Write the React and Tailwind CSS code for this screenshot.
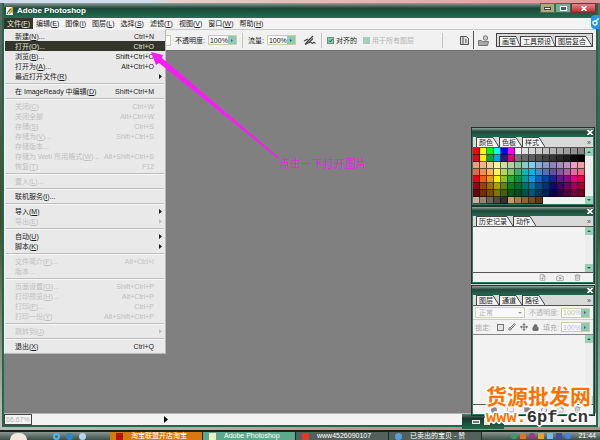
import React from 'react';
import { Brush, Folder, Lock, Move, StickyNote, Trash2, Camera, FilePlus } from 'lucide-react';

const SEP = 'sep';

const fileMenu = [
  { label: '新建', accel: 'N', dots: true, keys: 'Ctrl+N' },
  { label: '打开', accel: 'O', dots: true, keys: 'Ctrl+O', active: true },
  { label: '浏览', accel: 'B', dots: true, keys: 'Shift+Ctrl+O' },
  { label: '打开为', accel: 'A', dots: true, keys: 'Alt+Ctrl+O' },
  { label: '最近打开文件', accel: 'R', sub: true },
  SEP,
  { label: '在 ImageReady 中编辑', accel: 'D', keys: 'Shift+Ctrl+M' },
  SEP,
  { label: '关闭', accel: 'C', keys: 'Ctrl+W', disabled: true },
  { label: '关闭全部', keys: 'Alt+Ctrl+W', disabled: true },
  { label: '存储', accel: 'S', keys: 'Ctrl+S', disabled: true },
  { label: '存储为', accel: 'V', dots: true, keys: 'Shift+Ctrl+S', disabled: true },
  { label: '存储版本', dots: true, disabled: true },
  { label: '存储为 Web 所用格式', accel: 'W', dots: true, keys: 'Alt+Shift+Ctrl+S', disabled: true },
  { label: '恢复', accel: 'T', keys: 'F12', disabled: true },
  SEP,
  { label: '置入', accel: 'L', dots: true, disabled: true },
  SEP,
  { label: '联机服务', accel: 'I', dots: true },
  SEP,
  { label: '导入', accel: 'M', sub: true },
  { label: '导出', accel: 'E', sub: true, disabled: true },
  SEP,
  { label: '自动', accel: 'U', sub: true },
  { label: '脚本', accel: 'K', sub: true },
  SEP,
  { label: '文件简介', accel: 'F', dots: true, keys: 'Alt+Ctrl+I', disabled: true },
  { label: '版本', dots: true, disabled: true },
  SEP,
  { label: '页面设置', accel: 'G', dots: true, keys: 'Shift+Ctrl+P', disabled: true },
  { label: '打印预览', accel: 'H', dots: true, keys: 'Alt+Ctrl+P', disabled: true },
  { label: '打印', accel: 'P', dots: true, keys: 'Ctrl+P', disabled: true },
  { label: '打印一份', accel: 'Y', keys: 'Alt+Shift+Ctrl+P', disabled: true },
  SEP,
  { label: '跳转到', accel: 'J', sub: true, disabled: true },
  SEP,
  { label: '退出', accel: 'X', keys: 'Ctrl+Q' },
];

const menus = [
  ['文件', 'F'], ['编辑', 'E'], ['图像', 'I'], ['图层', 'L'], ['选择', 'S'],
  ['滤镜', 'T'], ['视图', 'V'], ['窗口', 'W'], ['帮助', 'H'],
];

const swatches = [
  'f00 ff0 0f0 0ff 00f f0f fff e1e1e1 d7d7d7 cccccc c0c0c0 b4b4b4 a8a8a8 9c9c9c 909090 848484',
  'e2001f fff200 00a63f 00a5e8 35137e e3007b 747474 686868 5c5c5c 505050 434343 363636 292929 1c1c1c 0a0a0a 000',
  'f29b76 f6b37f facd89 fff799 cce198 acd598 89c997 84ccc9 7ecef4 88abda 8c97cb 8f82bc aa89bd c490bf f19ec2 f29c9f',
  'eb6841 f19149 f8b551 fff45c b3d465 80c269 32b16c 13b5b1 00b7ee 448aca 556fb5 5f52a0 8957a1 ae5da1 ea68a2 eb6877',
  'e60012 eb6100 f39800 fff100 8fc31f 22ac38 009944 009e96 00a0e9 0068b7 00479d 1d2088 601986 920783 e4007f e5004f',
  '9a0016 a04000 a56b00 aba000 5f8519 097c25 006e31 00716b 0075a9 004e84 003472 100964 440062 6a005f a4005b a40035',
  '6d0010 723000 7a4d00 7d7500 456012 005a18 004e22 00514c 00547c 003860 002452 080247 2e0046 4b0043 750040 740024',
  'c7b299 998675 736357 534741 362f2d c69c6d a67c52 8c6239 754c24 603913',
].map((row) => row.split(' '));

const Accel = ({ k }) => (k ? <>(<u className="underline-offset-1">{k}</u>)</> : null);

const MenuRow = ({ item }) => (
  <button
    type="button"
    role="menuitem"
    disabled={item.disabled}
    className={`flex h-[10px] w-full items-center pl-[10px] pr-[3px] text-left ${
      item.active ? 'bg-[#33352a] text-[#e4e4dc]' : item.disabled ? 'text-[#c0c0c0]' : 'text-[#1c1c1c]'
    }`}
  >
    <span className="flex-1 whitespace-nowrap">
      {item.label}
      <Accel k={item.accel} />
      {item.dots && '...'}
    </span>
    <span className="whitespace-nowrap">{item.keys}</span>
    <span className="flex w-[8px] justify-end">
      {item.sub && (
        <svg className="h-[5px] w-[3px]" viewBox="0 0 3 5" fill="currentColor">
          <path d="M0 0l3 2.5L0 5z" />
        </svg>
      )}
    </span>
  </button>
);

const FileMenu = () => (
  <div
    role="menu"
    className="absolute left-0 top-full z-20 w-[162px] border border-[#f4f4f4] border-b-[#b8b8b8] border-r-[#b8b8b8] bg-[#e9e9e9] pb-[2px] pt-px"
  >
    {fileMenu.map((item, i) =>
      item === SEP ? (
        <div key={i} className="flex h-[5px] items-center px-px">
          <div className="h-[2px] flex-1 border-b border-t border-b-[#f8f8f8] border-t-[#bdbdbd]" />
        </div>
      ) : (
        <MenuRow key={i} item={item} />
      )
    )}
  </div>
);

const Percent = ({ id, muted }) => (
  <span className="flex h-[10px] w-[29px] border border-[#c9cda9] bg-[#fafafa]">
    <input
      id={id}
      defaultValue="100%"
      className={`w-[19px] min-w-0 bg-transparent pl-px outline-none ${muted ? 'text-[#bcbcbc]' : 'text-[#222]'}`}
    />
    <button type="button" aria-label="滑块" className="flex w-2 items-center justify-center bg-[#8fc9b1]">
      <svg className="h-[3px] w-[2px]" viewBox="0 0 2 3" fill="#3c5b8c">
        <path d="M0 0l2 1.5L0 3z" />
      </svg>
    </button>
  </span>
);

const Tab = ({ children, narrow }) => (
  <button type="button" className="flex h-[10px] items-stretch whitespace-nowrap text-[#1d1d1d]">
    <span className="border-l border-t border-[#444] bg-[#f3f3f3] pl-[2px]">{children}</span>
    <svg className={narrow ? 'h-[10px] w-1' : 'h-[10px] w-[6px]'} viewBox="0 0 6 10" preserveAspectRatio="none">
      <path d="M0 0L6 10H0z" fill="#f3f3f3" />
      <path d="M0 .5L6 10" stroke="#444" fill="none" />
    </svg>
  </button>
);

const Palette = ({ tabs, children }) => (
  <section className="border border-[#20352d] bg-[#f2f2f2]">
    <header className="flex h-[9px] items-center justify-end bg-gradient-to-b from-[#8fa69c] via-[#23473a] via-40% to-[#1b6b50] pr-px">
      <button type="button" aria-label="关闭面板">
        <svg className="h-[5px] w-[6px]" viewBox="0 0 6 5" stroke="#fff" strokeWidth="1.6">
          <path d="M.5 0l5 5M5.500 0l-5 5" />
        </svg>
      </button>
    </header>
    <div className="border-x border-b border-[#2c7a60]">
      <div className="flex h-[11px] items-end border-b border-[#555] bg-[#d9d9d9] pl-[3px]">
        {tabs.map((t) => (
          <Tab key={t}>{t}</Tab>
        ))}
        <button type="button" aria-label="面板菜单" className="ml-auto pr-[2px] text-[#444]">»</button>
      </div>
      {children}
    </div>
  </section>
);

const ScrollBar = () => (
  <div className="flex w-2 shrink-0 flex-col justify-between bg-[#ededed]">
    <button type="button" aria-label="向上" className="flex h-2 items-center justify-center bg-[#9ccfba]">
      <svg className="h-[2px] w-1" viewBox="0 0 4 2" fill="#3a5a4d"><path d="M0 2l2-2 2 2z" /></svg>
    </button>
    <button type="button" aria-label="向下" className="flex h-2 items-center justify-center bg-[#9ccfba]">
      <svg className="h-[2px] w-1" viewBox="0 0 4 2" fill="#3a5a4d"><path d="M0 0l2 2 2-2z" /></svg>
    </button>
  </div>
);

const Footer = ({ children }) => (
  <div className="flex h-[10px] items-center justify-end gap-[10px] border-t border-[#555] pr-[12px] text-[#858585]">
    {children}
  </div>
);

const Palettes = () => (
  <aside className="absolute bottom-[9px] right-px z-10 flex w-[124px] flex-col">
    <Palette tabs={['颜色', '色板', '样式']}>
      <div className="flex">
        <div className="flex-1">
          {swatches.map((row, r) => (
            <div key={r} className="flex">
              {row.map((c, i) => (
                <button
                  key={i}
                  type="button"
                  aria-label={`#${c}`}
                  className="size-[7px] border-b border-r border-black/60"
                  style={{ backgroundColor: `#${c}` }}
                />
              ))}
            </div>
          ))}
        </div>
        <ScrollBar />
      </div>
    </Palette>
    <Palette tabs={['历史记录', '动作']}>
      <div className="flex h-[45px]">
        <div className="flex-1" />
        <ScrollBar />
      </div>
      <Footer>
        <FilePlus size={7} />
        <Camera size={8} />
        <Trash2 size={7} />
      </Footer>
    </Palette>
    <div className="h-px bg-[#cfd8d4]" />
    <Palette tabs={['图层', '通道', '路径']}>
      <div className="flex h-[14px] items-center border-b border-[#ccc] pl-[2px] pr-[3px] text-[#b4b4b4]">
        <select
          aria-label="混合模式"
          className="h-[11px] w-[50px] appearance-none border border-[#d0d3b4] bg-[#f8f8f8] pl-[3px] outline-none"
        >
          <option>正常</option>
        </select>
        <svg className="-ml-[7px] h-[2px] w-1" viewBox="0 0 4 2" fill="#999"><path d="M0 0l2 2 2-2z" /></svg>
        <label htmlFor="opacity2" className="ml-auto mr-[2px] whitespace-nowrap">不透明度:</label>
        <Percent id="opacity2" muted />
      </div>
      <div className="flex h-[15px] items-center border-b border-[#888] pl-[2px] pr-[3px] text-[#a8a8a8]">
        <span>锁定:</span>
        <div className="ml-[6px] flex items-center gap-1 text-[#6d6d6d]">
          <button type="button" aria-label="锁定透明像素" className="size-[7px] border border-[#777] bg-[#e2e2e2]" />
          <button type="button" aria-label="锁定图像"><Brush size={8} strokeWidth={3} /></button>
          <button type="button" aria-label="锁定位置"><Move size={8} strokeWidth={3} /></button>
          <button type="button" aria-label="锁定全部"><Lock size={7} fill="currentColor" strokeWidth={3} /></button>
        </div>
        <label htmlFor="fill" className="ml-auto mr-[2px]">填充:</label>
        <Percent id="fill" muted />
      </div>
      <div className="flex h-[69px]">
        <div className="flex-1" />
        <ScrollBar />
      </div>
      <Footer>
        <span className="size-[6px] rounded-full bg-[#8b8b8b]" />
        <Folder size={7} />
        <Folder size={7} fill="currentColor" />
        <span className="size-[6px] rounded-full border border-[#8b8b8b]" />
        <StickyNote size={7} />
        <Trash2 size={7} />
      </Footer>
    </Palette>
  </aside>
);

const OptionsBar = () => (
  <div className="flex h-[22px] items-center border-b border-t border-b-[#6e6e6e] border-t-[#c9c9c9] bg-[#f1f1f1] pr-[3px]">
    <div className="flex w-[171px] justify-end pr-1">
      <span className="h-[11px] w-10 border border-[#c9cda9] bg-[#fafafa]" />
    </div>
    <label htmlFor="opacity" className="mr-[3px]">不透明度:</label>
    <Percent id="opacity" />
    <i className="mx-[5px] h-[15px] w-px bg-[#c2c2c2]" />
    <label htmlFor="flow" className="mr-[3px]">流量:</label>
    <Percent id="flow" />
    <button type="button" aria-label="喷枪" className="ml-[7px]">
      <svg className="h-[11px] w-[13px]" viewBox="0 0 13 11" fill="none" stroke="#444">
        <path d="M10 1L5 6l-3 3.500 4-2 4-4M1 6l4-2M6 8c2-3 3 2 4 0s2 1 2.500 0" strokeWidth="1.200" />
      </svg>
    </button>
    <i className="mx-[5px] h-[15px] w-px bg-[#c2c2c2]" />
    <span className="relative flex">
      <input id="aligned" type="checkbox" defaultChecked className="size-[7px] appearance-none border border-[#5c9a82] bg-[#8fc9b1]" />
      <svg className="pointer-events-none absolute inset-0 size-[7px]" viewBox="0 0 7 7" fill="none" stroke="#163">
        <path d="M2 3.500l1.200 1.500L5.500 2" />
      </svg>
    </span>
    <label htmlFor="aligned" className="ml-[2px] mr-[6px]">对齐的</label>
    <input id="all-layers" type="checkbox" className="size-[7px] appearance-none bg-[#a3d0be]" />
    <label htmlFor="all-layers" className="ml-[2px] text-[#b3b3b3]">用于所有图层</label>
    <i className="ml-auto mr-[17px] h-[15px] w-px bg-[#c2c2c2]" />
    <button type="button" aria-label="画笔面板">
      <svg className="h-[9px] w-[9px]" viewBox="0 0 9 9" fill="#ddd" stroke="#555">
        <path d="M.5.5h6l2 2v6h-8zM3 .5v8M5 4h2M5 6h2" />
      </svg>
    </button>
    <i className="mx-[4px] h-[18px] w-px bg-[#555]" />
    <button type="button" aria-label="文件浏览器">
      <svg className="h-[11px] w-[12px]" viewBox="0 0 12 11" fill="#aaa" stroke="#777">
        <path d="M.5 5.500h3l1 1h6l-1 4h-9z" />
        <circle cx="7.500" cy="3" r="2.200" fill="#ccc" />
      </svg>
    </button>
    <div className="ml-[6px] flex h-[14px] w-[97px] items-end border border-[#444] bg-[#d9d9d9] pl-[2px]">
      <Tab narrow>画笔</Tab>
      <Tab narrow>工具预设</Tab>
      <Tab>图层复合</Tab>
    </div>
  </div>
);

const TitleBar = () => (
  <header className="flex h-[15px] items-center bg-gradient-to-b from-[#8ea39b] via-[#1c4537] via-35% to-[#1d7254] pl-px">
    <svg className="h-[9px] w-[10px]" viewBox="0 0 10 9">
      <path d="M1 1h6l1 8H1z" fill="#f4f4ea" />
      <path d="M3 5c2-4 4-3 5-4 1 3-1 6-4 7z" fill="#d9a52f" />
      <path d="M2 8c1-3 3-4 4-5" stroke="#2d6da8" fill="none" />
    </svg>
    <h1 className="ml-[2px] text-[8px] font-bold text-white">Adobe Photoshop</h1>
    <div className="ml-auto flex h-[10px] self-start">
      <button type="button" aria-label="最小化" className="flex w-[15px] items-center justify-center border border-[#596a4e] bg-[#a8a878]">
        <span className="h-[3px] w-[7px] border border-[#444] bg-white" />
      </button>
      <button type="button" aria-label="最大化" className="flex w-4 items-center justify-center border border-[#3b6b58] bg-[#6cb396]">
        <span className="h-[5px] w-[7px] border border-white bg-[#35705a]" />
      </button>
      <button type="button" aria-label="关闭" className="flex w-[25px] items-center justify-center border border-[#7c2c32] bg-gradient-to-b from-[#dd8585] to-[#c4202e]">
        <svg className="h-[5px] w-[6px]" viewBox="0 0 6 5" stroke="#fff" strokeWidth="1.600"><path d="M.5 0l5 5M5.500 0l-5 5" /></svg>
      </button>
    </div>
  </header>
);

const TaskButton = ({ icon, className, children }) => (
  <button type="button" className={`flex w-[93px] items-center gap-2 whitespace-nowrap border-r border-[#1b2a25] pl-[6px] text-white ${className}`}>
    <span className={`size-[7px] shrink-0 ${icon}`} />
    {children}
  </button>
);

const TaskBar = () => (
  <footer className="flex shrink-0 border-t-2 border-[#16211d] bg-gradient-to-b from-[#8a9792] to-[#3d5047] text-[7px] leading-[8px]">
    <div className="flex w-[110px] items-center gap-[6px] pl-[10px]">
      <span className="mr-5 h-[7px] w-[17px] rounded-t-full bg-[#f0e8e0]" />
      <span className="size-[7px] rounded-full border-2 border-[#4cb8ee]" />
      <span className="size-[7px] rounded-full bg-[#2d86c5]" />
      <span className="size-[7px] rounded-sm bg-[#b4d5ee]" />
    </div>
    <TaskButton icon="bg-[#b3160c]" className="bg-[#d57a0c]">淘宝联盟开店淘宝</TaskButton>
    <TaskButton icon="bg-[#f1f1c8]" className="bg-[#5caa8e]">Adobe Photoshop</TaskButton>
    <TaskButton icon="bg-[#e03a24]" className="bg-[#52615b]">www4526090107</TaskButton>
    <TaskButton icon="rounded-full bg-[#5d9be0]" className="bg-[#52615b]">已卖出的宝贝 - 赞</TaskButton>
    <div className="ml-auto flex items-center gap-[3px] pr-1 text-white">
      <span className="size-[6px] rounded-full bg-[#3a9c6d]" />
      <span className="size-[6px] bg-[#e0722a]" />
      <span className="size-[6px] rounded-full bg-[#a3308a]" />
      <span className="size-[6px] bg-[#e0a52a]" />
      <span className="size-[6px] bg-[#74b8ea]" />
      <span className="size-[6px] bg-[#3d4f9c]" />
      <span className="size-[6px] rounded-full bg-[#3f83ee]" />
      <span className="ml-1">21:44</span>
    </div>
  </footer>
);

export default function App() {
  return (
    <div className="relative flex h-screen flex-col overflow-hidden bg-gradient-to-b from-[#5d6f66] via-[#37502b] to-[#c8ccc4] font-['Liberation_Sans','Noto_Sans_CJK_SC',sans-serif] text-[7px] leading-[9px] text-[#222]">
      <div className="h-[3px] shrink-0 bg-gradient-to-r from-[#cfdcec] from-25% via-[#eccbc8] via-30% to-[#d99a98]" />

      <div className="relative mx-[2px] flex min-h-0 flex-1 flex-col border-x-2 border-b-2 border-[#22664f]">
        <TitleBar />
        <nav className="relative flex h-[11px] shrink-0 bg-[#f3f3f3]">
          {menus.map(([name, key], i) => (
            <button
              key={name}
              type="button"
              className={`whitespace-nowrap px-[3px] ${i === 0 ? 'bg-[#33352a] text-[#e4e4dc]' : ''}`}
            >
              {name}
              <Accel k={key} />
            </button>
          ))}
          <FileMenu />
        </nav>
        <OptionsBar />

        <main className="flex-1 bg-[#808080]" />

        <div className="flex h-[12px] shrink-0 items-center border-t border-[#b5b5b5] bg-[#f3f3f3]">
          <output className="h-[11px] w-7 border border-[#444] pl-px text-[#b4b4b4]">66.67%</output>
          <svg className="ml-[132px] h-[7px] w-1" viewBox="0 0 4 7"><path d="M0 0l4 3.500L0 7z" /></svg>
        </div>
        <div className="absolute -bottom-1 right-[92px] flex h-[15px] w-[42px] items-center gap-1 bg-gradient-to-b from-[#5f7d72] via-[#17392d] via-30% to-[#1d6b50] pl-[10px]">
          <span className="h-1 w-2 border border-[#eee] bg-[#777]" />
          <span className="h-[7px] w-[6px] bg-[#e8e6c8]" />
        </div>
        <Palettes />
      </div>

      <div className="h-[3px] shrink-0 bg-gradient-to-r from-[#b9bdb8] via-[#c99a90] via-50% to-[#b98a80]" />
      <TaskBar />

      <svg className="pointer-events-none absolute left-[151px] top-[52px] z-30 h-[108px] w-[130px]" viewBox="0 0 130 108" fill="#f81cf8">
        <path d="M0 0L12 3l-1 3L128 105.500l-1 1L8 11l-3 2z" />
      </svg>
      <p className="absolute left-[279px] top-[158px] z-30 whitespace-nowrap text-[11px] leading-[13px] text-[#f01cf0]">点击一下打开图片</p>

      <button type="button" aria-label="分享" className="absolute right-0 top-[15px] z-30 flex h-[14px] w-[9px] items-center justify-center rounded-l-sm bg-[#2295e6]">
        <svg className="h-2 w-[7px]" viewBox="0 0 7 8" fill="none" stroke="#fff" strokeWidth="1.300">
          <circle cx="3" cy="5" r="2" />
          <path d="M4 3l2-2h1" />
        </svg>
      </button>

      <div className="absolute bottom-[13px] right-[9px] z-30 flex flex-col items-start font-bold text-[#fa7200] [text-shadow:2px_0_#fff,-2px_0_#fff,0_2px_#fff,0_-2px_#fff,1px_1px_#fff,-1px_-1px_#fff,1px_-1px_#fff,-1px_1px_#fff]">
        <span className="text-[21px] leading-[22px]">货源批发网</span>
        <a href="#6pf" className="font-['Liberation_Mono',monospace] text-[17px] leading-[19px]">
          www.<span className="text-[#333]">6pf.cn</span>
        </a>
      </div>
    </div>
  );
}
